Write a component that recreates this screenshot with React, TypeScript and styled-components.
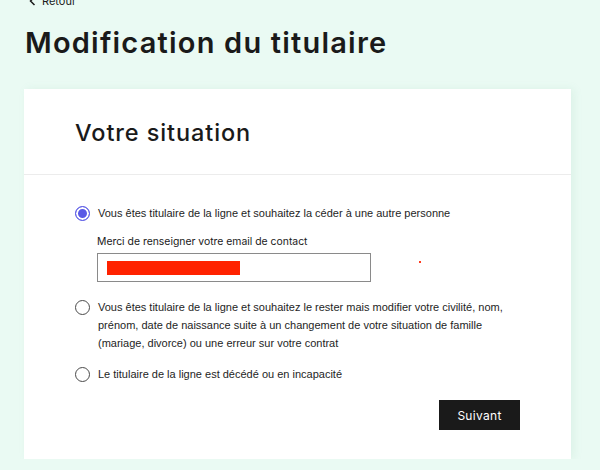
import React from "react";
import styled, { createGlobalStyle } from "styled-components";

const Global = createGlobalStyle`
  html, body { margin: 0; padding: 0; }
  body {
    background: #eafaf3;
    font-family: "Liberation Sans", Arial, sans-serif;
    color: #1a1a1a;
    overflow: hidden;
  }
`;

const Page = styled.div`
  padding: 0 29px 0 24px;
`;

const BackLink = styled.a`
  display: flex;
  align-items: center;
  gap: 6px;
  margin-top: -6px;
  margin-left: 5px;
  height: 14px;
  font-family: Inter, sans-serif;
  font-size: 11px;
  color: #1a1a1a;
  text-decoration: none;
`;

const Title = styled.h1`
  margin: 15px 0 0 1px;
  font-family: Inter, sans-serif;
  font-weight: 600;
  font-size: 29px;
  line-height: 40px;
  letter-spacing: 1.2px;
  color: #1a1a1a;
`;

const Card = styled.section`
  margin-top: 26px;
  background: #ffffff;
  box-shadow: 3px 0 8px rgba(120, 190, 160, 0.12);
`;

const CardHeader = styled.div`
  height: 85px;
  display: flex;
  align-items: center;
  padding: 0 51px;
  border-bottom: 1px solid #ececec;
`;

const CardTitle = styled.h2`
  margin: 2px 0 0;
  font-family: Inter, sans-serif;
  font-weight: 500;
  font-size: 23.5px;
  letter-spacing: 0.9px;
  color: #1a1a1a;
`;

const CardBody = styled.div`
  padding: 29px 51px 29px 51px;
  display: flex;
  flex-direction: column;
`;

const Option = styled.label<{ $gap?: number }>`
  display: flex;
  align-items: flex-start;
  gap: 8px;
  margin-top: ${(p) => p.$gap ?? 0}px;
  font-size: 11px;
  line-height: 18px;
  color: #1e1e1e;
  cursor: pointer;
`;

const Radio = styled.span<{ $checked?: boolean }>`
  flex: none;
  box-sizing: border-box;
  width: 15px;
  height: 15px;
  margin-top: 1.5px;
  border-radius: 50%;
  border: 1.5px solid ${(p) => (p.$checked ? "#5a5ae6" : "#4a4a4a")};
  background: ${(p) => (p.$checked ? "#5a5ae6" : "#fff")};
  box-shadow: ${(p) => (p.$checked ? "inset 0 0 0 2px #fff" : "none")};
`;

const SubBlock = styled.div`
  margin: 11px 0 0 22px;
  display: flex;
  flex-direction: column;
`;

const FieldLabel = styled.span`
  font-family: Inter, sans-serif;
  font-size: 10.4px;
  line-height: 18px;
  color: #1a1a1a;
`;

const FieldRow = styled.div`
  display: flex;
  align-items: center;
  margin-top: 2px;
  position: relative;
`;

const Input = styled.div`
  box-sizing: border-box;
  width: 274px;
  height: 29px;
  border: 1px solid #8a8a8a;
  background: #fff;
  display: flex;
  align-items: center;
  padding-left: 9px;
`;

const Redacted = styled.span`
  display: block;
  width: 133px;
  height: 14px;
  background: #ff2200;
`;

const Dot = styled.span`
  position: absolute;
  left: 322px;
  top: 8px;
  width: 2px;
  height: 2px;
  background: #ff3b1f;
`;

const Actions = styled.div`
  display: flex;
  justify-content: flex-end;
  margin-top: 17px;
`;

const Button = styled.button`
  width: 81px;
  height: 30px;
  border: none;
  background: #1a1a1a;
  color: #fff;
  font-family: Inter, sans-serif;
  font-size: 12px;
  letter-spacing: 0.3px;
  cursor: pointer;
`;

export default function App() {
  return (
    <>
      <Global />
      <Page>
        <BackLink href="#">
          <svg width="7" height="10" viewBox="0 0 7 10" fill="none">
            <path d="M5.5 1 L1.5 5 L5.5 9" stroke="#1a1a1a" strokeWidth="1.5" />
          </svg>
          Retour
        </BackLink>
        <Title>Modification du titulaire</Title>
        <Card>
          <CardHeader>
            <CardTitle>Votre situation</CardTitle>
          </CardHeader>
          <CardBody>
            <Option>
              <Radio $checked />
              Vous êtes titulaire de la ligne et souhaitez la céder à une autre personne
            </Option>
            <SubBlock>
              <FieldLabel>Merci de renseigner votre email de contact</FieldLabel>
              <FieldRow>
                <Input>
                  <Redacted />
                </Input>
                <Dot />
              </FieldRow>
            </SubBlock>
            <Option $gap={16}>
              <Radio />
              <span>
                Vous êtes titulaire de la ligne et souhaitez le rester mais modifier votre civilité, nom,
                prénom, date de naissance suite à un changement de votre situation de famille
                (mariage, divorce) ou une erreur sur votre contrat
              </span>
            </Option>
            <Option $gap={13}>
              <Radio />
              Le titulaire de la ligne est décédé ou en incapacité
            </Option>
            <Actions>
              <Button>Suivant</Button>
            </Actions>
          </CardBody>
        </Card>
      </Page>
    </>
  );
}
